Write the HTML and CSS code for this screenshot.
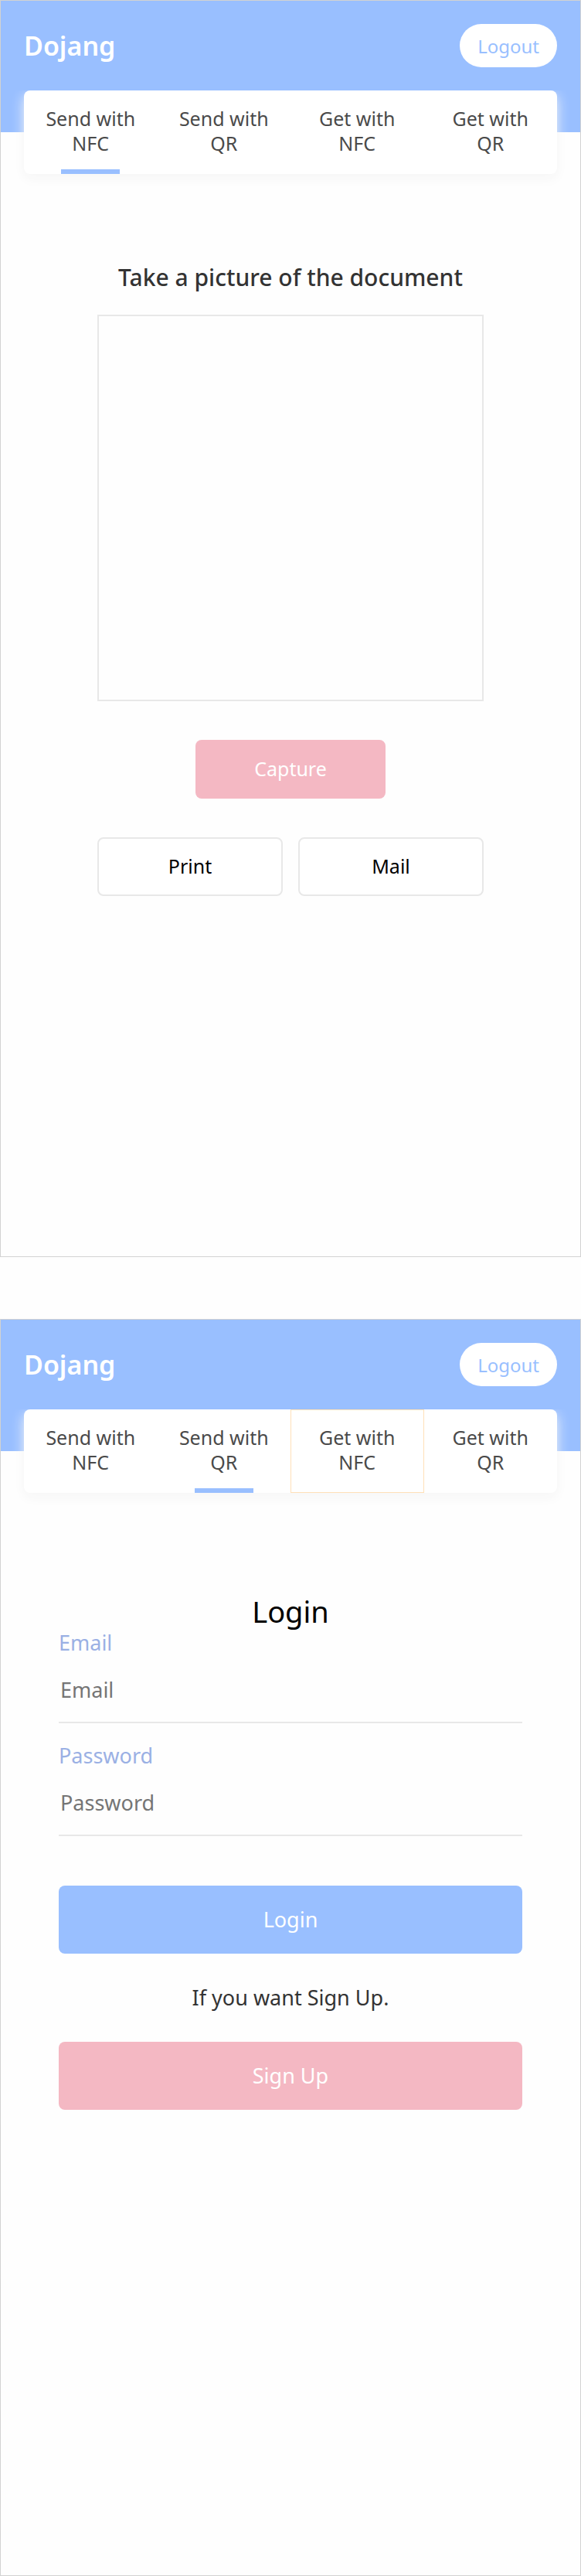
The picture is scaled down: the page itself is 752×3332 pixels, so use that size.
FILE: index.html
```html
<!DOCTYPE html>
<html lang="en">
<head>
<meta charset="utf-8">
<meta name="viewport" content="width=device-width, initial-scale=1">
<title>Dojang</title>
<link rel="stylesheet" href="styles.css">
</head>
<body>
<div class="screens">
  <section class="screen">
    <header class="header">
      <h1 class="brand">Dojang</h1>
      <button type="button" class="logout">Logout</button>
    </header>
    <nav class="tabs">
      <a href="#send-nfc" class="tab tab-active">Send with NFC</a>
      <a href="#send-qr" class="tab">Send with QR</a>
      <a href="#get-nfc" class="tab">Get with NFC</a>
      <a href="#get-qr" class="tab">Get with QR</a>
    </nav>
    <main class="capture">
      <h2 class="capture-title">Take a picture of the document</h2>
      <div class="preview"></div>
      <button type="button" class="btn btn-pink btn-capture">Capture</button>
      <div class="actions">
        <button type="button" class="btn btn-outline">Print</button>
        <button type="button" class="btn btn-outline">Mail</button>
      </div>
    </main>
  </section>

  <section class="screen">
    <header class="header">
      <h1 class="brand">Dojang</h1>
      <button type="button" class="logout">Logout</button>
    </header>
    <nav class="tabs">
      <a href="#send-nfc" class="tab">Send with NFC</a>
      <a href="#send-qr" class="tab tab-active">Send with QR</a>
      <a href="#get-nfc" class="tab tab-focus">Get with NFC</a>
      <a href="#get-qr" class="tab">Get with QR</a>
    </nav>
    <main class="login">
      <h2 class="login-title">Login</h2>
      <form class="form">
        <div class="field">
          <label class="label" for="email">Email</label>
          <input class="input" id="email" type="email" placeholder="Email">
        </div>
        <div class="field">
          <label class="label" for="password">Password</label>
          <input class="input" id="password" type="password" placeholder="Password">
        </div>
        <button type="submit" class="btn btn-blue btn-large">Login</button>
        <p class="hint">If you want Sign Up.</p>
        <button type="button" class="btn btn-pink btn-large">Sign Up</button>
      </form>
    </main>
  </section>
</div>
</body>
</html>
```
FILE: styles.css
```css
* {
  box-sizing: border-box;
}

body {
  margin: 0;
  background: #fefefe;
  color: #333;
  font-family: "Noto Sans", "Open Sans", sans-serif;
}

h1, h2, p {
  margin: 0;
}

button, input {
  font-family: inherit;
}

.screens {
  display: flex;
  flex-direction: column;
  gap: 80px;
}

.screen {
  min-height: 1626px;
  border: 1px solid #d2d2d2;
}

.header {
  display: flex;
  align-items: flex-start;
  justify-content: space-between;
  padding: 30px 30px 84px;
  background: #99bfff;
}

.brand {
  color: #fff;
  font-size: 34px;
  font-weight: 600;
  line-height: 56px;
}

.logout {
  height: 56px;
  padding: 0 23px;
  border: 0;
  border-radius: 28px;
  background: #fff;
  color: #99bfff;
  font-size: 24px;
}

.tabs {
  display: grid;
  grid-template-columns: repeat(4, 1fr);
  margin: -54px 30px 0;
  border-radius: 8px;
  background: #fff;
  box-shadow: 0 6px 16px #f6f6f6;
  clip-path: inset(0 -30px -30px -30px);
}

.tab {
  display: flex;
  flex-direction: column;
  align-items: center;
  justify-content: space-between;
  height: 108px;
  padding: 20px 26px 0;
  color: #4a4a4a;
  font-size: 25px;
  line-height: 32px;
  text-align: center;
  text-decoration: none;
}

.tab-active::after {
  content: "";
  width: 76px;
  height: 6px;
  background: #99bfff;
}

.tab-focus {
  outline: 1px solid #ffe0b8;
  outline-offset: -1px;
}

.capture {
  display: flex;
  flex-direction: column;
  align-items: center;
  width: 500px;
  max-width: 100%;
  margin: 114px auto 0;
}

.capture-title {
  margin-bottom: 28px;
  font-size: 30px;
  font-weight: 500;
  line-height: 40px;
  white-space: nowrap;
}

.preview {
  width: 100%;
  aspect-ratio: 1;
  border: 2px solid #e8e8e8;
}

.btn {
  height: 76px;
  padding: 0 24px 2px;
  border: 0;
  border-radius: 8px;
  font-size: 25px;
}

.btn-pink {
  background: #f4b8c3;
  color: #fff;
}

.btn-blue {
  background: #99bfff;
  color: #fff;
}

.btn-outline {
  border: 2px solid #e8e8e8;
  background: #fff;
  color: #000;
}

.btn-large {
  height: 88px;
}

.btn-capture {
  width: 246px;
  margin: 50px 0;
}

.actions {
  display: grid;
  grid-template-columns: 1fr 1fr;
  gap: 20px;
  width: 100%;
}

.login {
  width: 600px;
  max-width: 100%;
  margin: 130px auto 0;
}

.login-title {
  color: #000;
  font-size: 38px;
  font-weight: 400;
  line-height: 46px;
  text-align: center;
}

.form {
  display: flex;
  flex-direction: column;
}

.field {
  display: flex;
  flex-direction: column;
}

.field + .field {
  margin-top: 24px;
}

.field + .btn {
  margin-top: 64px;
}

.label {
  color: #9ab0e4;
  font-size: 27px;
  line-height: 36px;
}

.input {
  width: 100%;
  height: 86px;
  padding: 0 2px;
  border: 0;
  border-bottom: 2px solid #e8e8e8;
  background: transparent;
  color: #333;
  font-size: 27px;
}

.input::placeholder {
  color: #757575;
}

.btn-large {
  font-size: 27px;
}

.hint {
  margin: 39px 0;
  font-size: 27px;
  line-height: 36px;
  text-align: center;
}
```
